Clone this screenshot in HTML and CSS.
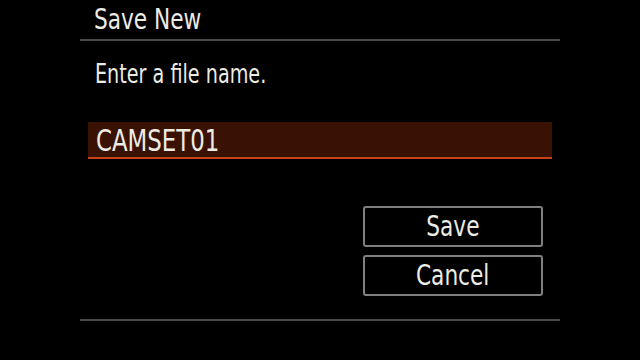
FILE: index.html
```html
<!DOCTYPE html>
<html lang="en">
<head>
  <meta charset="UTF-8">
  <title>Save New</title>
  <link rel="stylesheet" href="styles.css">
</head>
<body>
  <div class="panel">
    <h1 class="title"><span class="narrow">Save New</span></h1>
    <p class="prompt"><span class="narrow">Enter a file name.</span></p>
    <div class="name-field"><span class="narrow">CAMSET01</span></div>
    <div class="actions">
      <button class="btn"><span class="narrow">Save</span></button>
      <button class="btn"><span class="narrow">Cancel</span></button>
    </div>
  </div>
</body>
</html>
```

FILE: styles.css
```css
* { box-sizing: border-box; }
body {
  margin: 0;
  background: #000;
  color: #ecebe4;
  font-family: "DejaVu Sans Condensed", "Roboto", sans-serif;
  width: 640px;
  height: 360px;
  overflow: hidden;
}

/* camera UI font is narrower than anything installed */
.narrow {
  display: inline-block;
  transform: scaleX(0.86);
  transform-origin: left center;
}

.panel {
  width: 480px;
  height: 321px;
  margin-left: 80px;
  border-bottom: 2px solid #4a4a4a;
  display: flex;
  flex-direction: column;
}

.title {
  margin: 0;
  height: 41px;
  padding: 3px 0 0 14px;
  font-size: 28px;
  font-weight: normal;
  line-height: 34px;
  border-bottom: 2px solid #4a4a4a;
}

.prompt {
  margin: 18px 0 0 15px;
  font-size: 26px;
  line-height: 30px;
}
.prompt .narrow { transform: scaleX(0.82); }

.name-field {
  margin: 33px 8px 0;
  height: 37px;
  padding: 1px 0 0 8px;
  background: #3a1203;
  border-bottom: 2px solid #c8421c;
  font-size: 31px;
  line-height: 34px;
}
.name-field .narrow { transform: scaleX(0.82); }

.actions {
  margin: 47px 17px 0 auto;
  width: 180px;
  display: flex;
  flex-direction: column;
  gap: 8px;
}

.btn {
  height: 41px;
  background: #000;
  color: #ecebe4;
  border: 2px solid #808080;
  border-radius: 3px;
  font-family: inherit;
  font-size: 28px;
  line-height: 34px;
  padding: 0;
}
.btn .narrow { transform-origin: center; }
```
